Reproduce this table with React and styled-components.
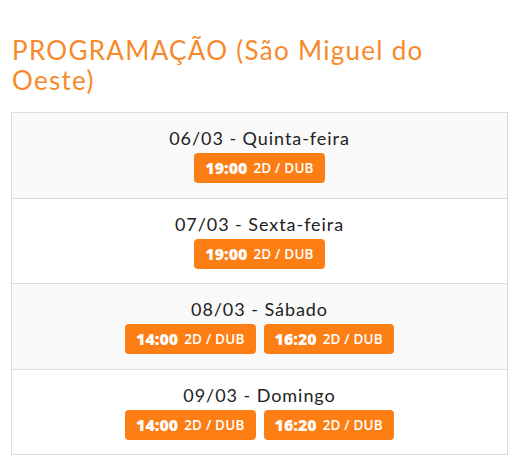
import React from "react";
import styled, { createGlobalStyle } from "styled-components";

const Global = createGlobalStyle`
  html, body { margin: 0; padding: 0; background: #fff; }
  body { font-family: "Lato", "Noto Sans", sans-serif; color: #212529; }
`;

const Page = styled.div`
  padding: 35px 9px 0 11px;
`;

const Title = styled.h2`
  margin: 0 0 17px 1px;
  max-width: 450px;
  font-family: "Lato", "Noto Sans", sans-serif;
  font-weight: 400;
  font-size: 26px;
  line-height: 30px;
  color: #f68a2b;
  letter-spacing: 1.3px;
`;

const Table = styled.div`
  border: 1px solid #dddddd;
  border-bottom: none;
`;

const Row = styled.div`
  display: flex;
  flex-direction: column;
  align-items: center;
  height: 85.5px;
  box-sizing: border-box;
  padding-top: 13px;
  border-bottom: 1px solid #dddddd;
  background: ${(p) => (p.$striped ? "#f9f9f9" : "#ffffff")};
`;

const Day = styled.div`
  font-family: "Lato", "Noto Sans", sans-serif;
  font-size: 18px;
  line-height: 24px;
  letter-spacing: 0.95px;
  color: #222;
  margin-bottom: 3px;
`;

const Sessions = styled.div`
  display: flex;
  gap: 8px;
`;

const Badge = styled.span`
  display: inline-flex;
  align-items: center;
  gap: 6px;
  height: 30px;
  padding: 0 11px 0 11px;
  border-radius: 4px;
  background: #fd7e14;
  color: #fff;
  font-family: "Open Sans", "Noto Sans", sans-serif;
  white-space: nowrap;
`;

const Time = styled.span`
  font-weight: 800;
  font-size: 16px;
`;

const Format = styled.span`
  font-weight: 600;
  font-size: 13.5px;
  letter-spacing: 0.2px;
`;

const days = [
  { label: "06/03 - Quinta-feira", times: ["19:00"] },
  { label: "07/03 - Sexta-feira", times: ["19:00"] },
  { label: "08/03 - Sábado", times: ["14:00", "16:20"] },
  { label: "09/03 - Domingo", times: ["14:00", "16:20"] },
];

export default function App() {
  return (
    <>
      <Global />
      <Page>
        <Title>PROGRAMAÇÃO (São Miguel do Oeste)</Title>
        <Table>
          {days.map((d, i) => (
            <Row key={d.label} $striped={i % 2 === 0}>
              <Day>{d.label}</Day>
              <Sessions>
                {d.times.map((t) => (
                  <Badge key={t}>
                    <Time>{t}</Time>
                    <Format>2D / DUB</Format>
                  </Badge>
                ))}
              </Sessions>
            </Row>
          ))}
        </Table>
      </Page>
    </>
  );
}
